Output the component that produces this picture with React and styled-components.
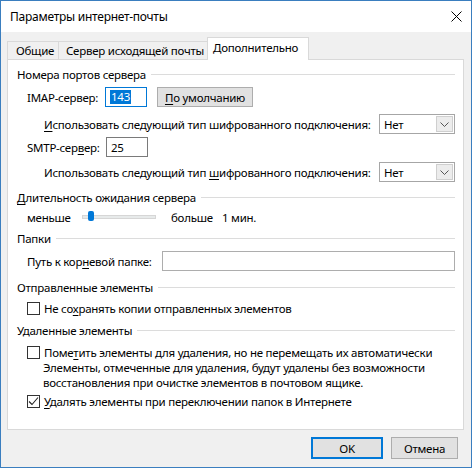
import React from 'react'
import styled, { createGlobalStyle } from 'styled-components'

const Global = createGlobalStyle`
  html, body {
    margin: 0;
    padding: 0;
    background: #ffffff;
  }
  * {
    box-sizing: border-box;
  }
`

const Window = styled.div`
  width: 472px;
  height: 468px;
  border: 1px solid #3a7ebf;
  background: #f0f0f0;
  display: flex;
  flex-direction: column;
  font-family: 'Noto Sans', 'Open Sans', sans-serif;
  font-size: 11.5px;
  letter-spacing: -0.25px;
  color: #000;
`

const TitleBar = styled.div`
  height: 31px;
  background: #fff;
  display: flex;
  align-items: center;
  justify-content: space-between;
  padding: 0 9px 0 9px;
`

const Title = styled.div`
  font-size: 12px;
`

const Body = styled.div`
  padding: 5px 7px 0 6px;
`

const TabBar = styled.div`
  display: flex;
  align-items: flex-end;
  height: 22px;
`

const Tab = styled.div`
  position: relative;
  width: ${({ $w }) => $w}px;
  height: ${({ $active }) => ($active ? 23 : 18)}px;
  margin-bottom: ${({ $active }) => ($active ? -1 : 0)}px;
  margin-left: ${({ $ml }) => $ml || 0}px;
  padding-left: ${({ $pl }) => $pl}px;
  display: flex;
  align-items: center;
  padding-bottom: ${({ $active }) => ($active ? 3 : 0)}px;
  background: ${({ $active }) => ($active ? '#fff' : '#f0f0f0')};
  border: 1px solid #d9d9d9;
  border-bottom: none;
  z-index: ${({ $active }) => ($active ? 1 : 0)};
  white-space: nowrap;
`

const Panel = styled.div`
  height: 371px;
  background: #fff;
  border: 1px solid #d9d9d9;
  padding: 0 8px 0 9px;
  display: flex;
  flex-direction: column;
`

const GroupTitle = styled.div`
  display: flex;
  align-items: center;
  height: 16px;
  margin-top: ${({ $mt }) => $mt}px;
  white-space: nowrap;

  &::after {
    content: '';
    flex: 1;
    height: 1px;
    background: #dcdcdc;
    margin-left: 5px;
  }
`

const Row = styled.div`
  display: flex;
  align-items: center;
  height: ${({ $h }) => $h || 20}px;
  margin-top: ${({ $mt }) => $mt}px;
  padding-left: ${({ $indent }) => $indent}px;
  white-space: nowrap;
`

const Label = styled.span`
  flex: none;
  width: ${({ $w }) => ($w ? `${$w}px` : 'auto')};
  margin-left: ${({ $ml }) => $ml || 0}px;
`

const Field = styled.div`
  flex: ${({ $w }) => ($w ? 'none' : '1')};
  width: ${({ $w }) => ($w ? `${$w}px` : 'auto')};
  height: 20px;
  border: 1px solid ${({ $tone }) => $tone || '#7a7a7a'};
  background: #fff;
  display: flex;
  align-items: center;
  padding-left: 4px;
`

const Selected = styled.span`
  background: #0078d7;
  color: #fff;
  line-height: 14px;
  padding: 0 1px;
`

const Button = styled.div`
  flex: none;
  width: ${({ $w }) => $w}px;
  height: ${({ $h }) => $h || 20}px;
  margin-left: ${({ $ml }) => $ml || 0}px;
  background: #e1e1e1;
  border: ${({ $default }) => ($default ? '2px solid #0078d7' : '1px solid #adadad')};
  display: flex;
  align-items: center;
  justify-content: center;
`

const Select = styled.div`
  flex: none;
  margin-left: auto;
  width: 76px;
  height: 20px;
  border: 1px solid #a6a6a6;
  background: #fff;
  display: flex;
  align-items: center;
  justify-content: space-between;
  padding: 0 1px 0 4px;
`

const Arrow = styled.div`
  width: 17px;
  height: 16px;
  background: #ececec;
  border: 1px solid #cfcfcf;
  display: flex;
  align-items: center;
  justify-content: center;
`

const Track = styled.div`
  position: relative;
  flex: none;
  width: 74px;
  height: 4px;
  background: #e7eaea;
  border: 1px solid #d6d6d6;
`

const Thumb = styled.div`
  position: absolute;
  left: 5px;
  top: -5px;
  width: 6px;
  height: 10px;
  border-radius: 2px;
  background: #0078d7;
`

const Box = styled.div`
  flex: none;
  width: 13px;
  height: 13px;
  border: 1px solid #333;
  background: #fff;
  margin-right: 4px;
  display: flex;
  align-items: center;
  justify-content: center;
`

const Note = styled.div`
  padding-left: 26px;
  line-height: 15px;
  height: 30px;
  white-space: nowrap;
`

const Footer = styled.div`
  display: flex;
  justify-content: flex-end;
  gap: 8px;
  padding: 7px 13px 0 0;
`

const U = styled.span`
  text-decoration: underline;
  text-underline-offset: 2px;
`

const CloseIcon = () => (
  <svg width="11" height="11" viewBox="0 0 11 11">
    <path d="M0.5 0.5 L10.5 10.5 M10.5 0.5 L0.5 10.5" stroke="#000" strokeWidth="1" />
  </svg>
)

const Chevron = () => (
  <svg width="9" height="5" viewBox="0 0 9 5">
    <path d="M0.5 0.5 L4.5 4.5 L8.5 0.5" stroke="#555" strokeWidth="1" fill="none" />
  </svg>
)

const Check = () => (
  <svg width="11" height="11" viewBox="0 0 11 11">
    <path d="M1 5.5 L4 8.5 L10 1.5" stroke="#222" strokeWidth="1.1" fill="none" />
  </svg>
)

const Checkbox = ({ checked, mt, children }) => (
  <Row $h={16} $mt={mt} $indent={10}>
    <Box>{checked && <Check />}</Box>
    <span>{children}</span>
  </Row>
)

export default function App () {
  return (
    <>
      <Global />
      <Window>
        <TitleBar>
          <Title>Параметры интернет-почты</Title>
          <CloseIcon />
        </TitleBar>
        <Body>
          <TabBar>
            <Tab $w={52} $pl={8}>Общие</Tab>
            <Tab $w={150} $pl={7} $ml={-1}>Сервер исходящей почты</Tab>
            <Tab $w={102} $pl={5} $ml={-1} $active>Дополнительно</Tab>
          </TabBar>
          <Panel>
            <GroupTitle $mt={6}>Номера портов сервера</GroupTitle>
            <Row $mt={5} $indent={10}>
              <Label $w={78}>IMAP-сервер:</Label>
              <Field $w={42} $tone="#0078d7"><Selected>143</Selected></Field>
              <Button $w={96} $ml={10}><span><U>П</U>о умолчанию</span></Button>
            </Row>
            <Row $mt={7} $indent={27}>
              <Label><U>И</U>спользовать следующий тип шифрованного подключения:</Label>
              <Select>Нет<Arrow><Chevron /></Arrow></Select>
            </Row>
            <Row $mt={3} $indent={10}>
              <Label $w={79}>SMTP-сер<U>в</U>ер:</Label>
              <Field $w={42}>25</Field>
            </Row>
            <Row $mt={5} $indent={27}>
              <Label>Использовать следующий тип <U>ш</U>ифрованного подключения:</Label>
              <Select>Нет<Arrow><Chevron /></Arrow></Select>
            </Row>
            <GroupTitle $mt={7}><span><U>Д</U>лительность ожидания сервера</span></GroupTitle>
            <Row $h={16} $mt={4} $indent={10}>
              <Label $w={55}>меньше</Label>
              <Track><Thumb /></Track>
              <Label $w={51} $ml={15}>больше</Label>
              <Label>1 мин.</Label>
            </Row>
            <GroupTitle $mt={5}>Папки</GroupTitle>
            <Row $mt={5} $indent={10}>
              <Label $w={135}>Путь к кор<U>н</U>евой папке:</Label>
              <Field $tone="#adadad" />
            </Row>
            <GroupTitle $mt={8}>Отправленные элементы</GroupTitle>
            <Checkbox mt={5}>Не со<U>х</U>ранять копии отправленных элементов</Checkbox>
            <GroupTitle $mt={6}>Удаленные элементы</GroupTitle>
            <Checkbox mt={6}>Поме<U>т</U>ить элементы для удаления, но не перемещать их автоматически</Checkbox>
            <Note>
              Элементы, отмеченные для удаления, будут удалены без возможности<br />
              восстановления при очистке элементов в почтовом ящике.
            </Note>
            <Checkbox mt={3} checked><U>У</U>далять элементы при переключении папок в Интернете</Checkbox>
          </Panel>
        </Body>
        <Footer>
          <Button $w={72} $h={22} $default>OK</Button>
          <Button $w={67} $h={22}>Отмена</Button>
        </Footer>
      </Window>
    </>
  )
}
